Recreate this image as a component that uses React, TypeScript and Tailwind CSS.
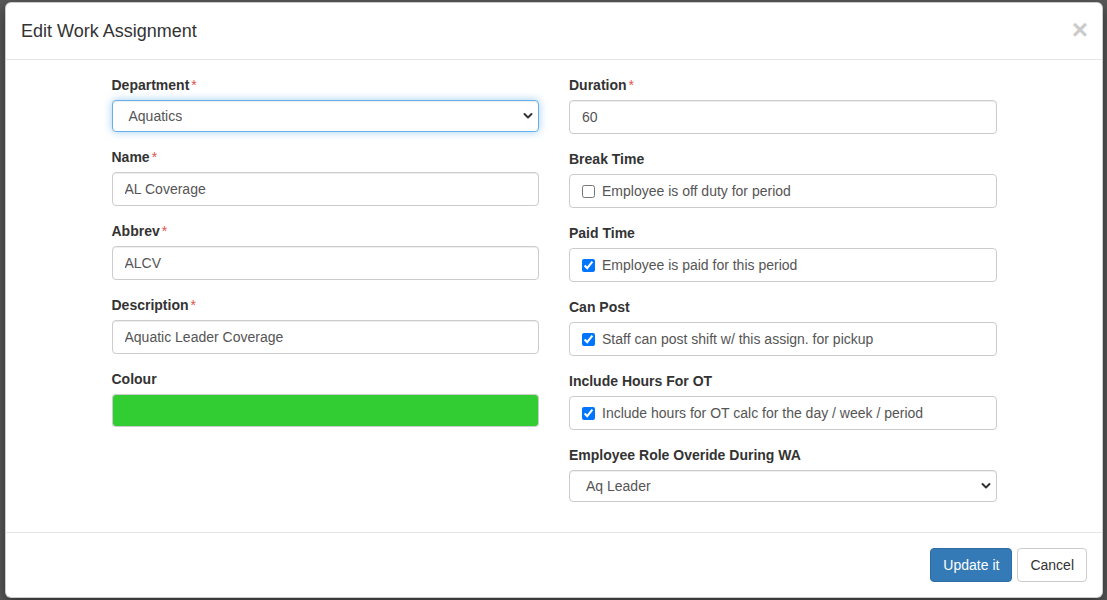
import React from 'react';

const font = { fontFamily: '"Liberation Sans", Arial, Helvetica, sans-serif' };

function Label({ text, required }: { text: string; required?: boolean }) {
    return (
        <label className="block text-[14px] font-bold leading-[20px] mb-[5px] text-[#333]">
            {text}
            {required && <span className="ml-[2px] font-normal text-[#e0524c]">*</span>}
        </label>
    );
}

function TextInput({ value }: { value: string }) {
    return (
        <input
            readOnly
            value={value}
            className="block w-full h-[34px] px-[12px] text-[14px] text-[#555] bg-white border border-[#ccc] rounded-[4px] shadow-[inset_0_1px_1px_rgba(0,0,0,0.075)] outline-none"
        />
    );
}

function Select({ value, focused }: { value: string; focused?: boolean }) {
    return (
        <div
            className={
                focused
                    ? 'relative flex items-center h-[32px] pl-[16px] pr-[24px] text-[14px] text-[#555] bg-white border border-[#66afe9] rounded-[4px] shadow-[inset_0_1px_1px_rgba(0,0,0,0.075),0_0_8px_rgba(102,175,233,0.6)]'
                    : 'relative flex items-center h-[32px] pl-[16px] pr-[24px] text-[14px] text-[#555] bg-white border border-[#ccc] rounded-[4px] shadow-[inset_0_1px_1px_rgba(0,0,0,0.075)]'
            }
        >
            <span>{value}</span>
            <svg className="absolute right-[5px] top-1/2 -translate-y-1/2" width="10" height="7" viewBox="0 0 10 7">
                <polyline points="1.5,1.5 5,5 8.5,1.5" fill="none" stroke="#333" strokeWidth="2" strokeLinecap="round" strokeLinejoin="round" />
            </svg>
        </div>
    );
}

function CheckRow({ text, checked }: { text: string; checked?: boolean }) {
    return (
        <div className="flex items-center h-[34px] pl-[12px] text-[14px] text-[#555] bg-white border border-[#ccc] rounded-[4px]">
            <input type="checkbox" readOnly checked={!!checked} className="m-0 mr-[7px] w-[13px] h-[13px]" />
            <span>{text}</span>
        </div>
    );
}

export default function App() {
    return (
        <div style={font} className="w-[1107px] h-[600px] overflow-hidden bg-[#5a5a5a] pl-[5px] pt-[3px]">
            <div className="w-[1098px] bg-white rounded-[6px] border border-black/20 shadow-[0_5px_15px_rgba(0,0,0,0.5)] overflow-hidden -mt-px">
                <div className="flex justify-between items-start px-[15px] py-[15px] border-b border-[#e5e5e5]">
                    <h4 className="text-[18px] leading-[26px] text-[#333]">Edit Work Assignment</h4>
                    <button className="text-[28px] font-bold leading-[24px] text-black opacity-20 -mr-[1px]">×</button>
                </div>

                <div className="pt-[15px] pb-[15px]">
                    <div className="grid grid-cols-2 gap-x-[30px] w-[885px] mx-auto">
                        <div>
                            <div className="mb-[15px]">
                                <Label text="Department" required />
                                <Select value="Aquatics" focused />
                            </div>
                            <div className="mb-[15px]">
                                <Label text="Name" required />
                                <TextInput value="AL Coverage" />
                            </div>
                            <div className="mb-[15px]">
                                <Label text="Abbrev" required />
                                <TextInput value="ALCV" />
                            </div>
                            <div className="mb-[15px]">
                                <Label text="Description" required />
                                <TextInput value="Aquatic Leader Coverage" />
                            </div>
                            <div className="mb-[15px]">
                                <Label text="Colour" />
                                <div className="h-[33px] bg-[#32cd32] border border-[#ccc] rounded-[4px]" />
                            </div>
                        </div>

                        <div>
                            <div className="mb-[15px]">
                                <Label text="Duration" required />
                                <TextInput value="60" />
                            </div>
                            <div className="mb-[15px]">
                                <Label text="Break Time" />
                                <CheckRow text="Employee is off duty for period" />
                            </div>
                            <div className="mb-[15px]">
                                <Label text="Paid Time" />
                                <CheckRow text="Employee is paid for this period" checked />
                            </div>
                            <div className="mb-[15px]">
                                <Label text="Can Post" />
                                <CheckRow text="Staff can post shift w/ this assign. for pickup" checked />
                            </div>
                            <div className="mb-[15px]">
                                <Label text="Include Hours For OT" />
                                <CheckRow text="Include hours for OT calc for the day / week / period" checked />
                            </div>
                            <div className="mb-[15px]">
                                <Label text="Employee Role Overide During WA" />
                                <Select value="Aq Leader" />
                            </div>
                        </div>
                    </div>
                </div>

                <div className="flex justify-end gap-[5px] p-[15px] border-t border-[#e5e5e5]">
                    <button className="h-[34px] px-[12px] text-[14px] text-white bg-[#337ab7] border border-[#2e6da4] rounded-[4px]">
                        Update it
                    </button>
                    <button className="h-[34px] px-[12px] text-[14px] text-[#333] bg-white border border-[#ccc] rounded-[4px]">
                        Cancel
                    </button>
                </div>
            </div>
        </div>
    );
}
